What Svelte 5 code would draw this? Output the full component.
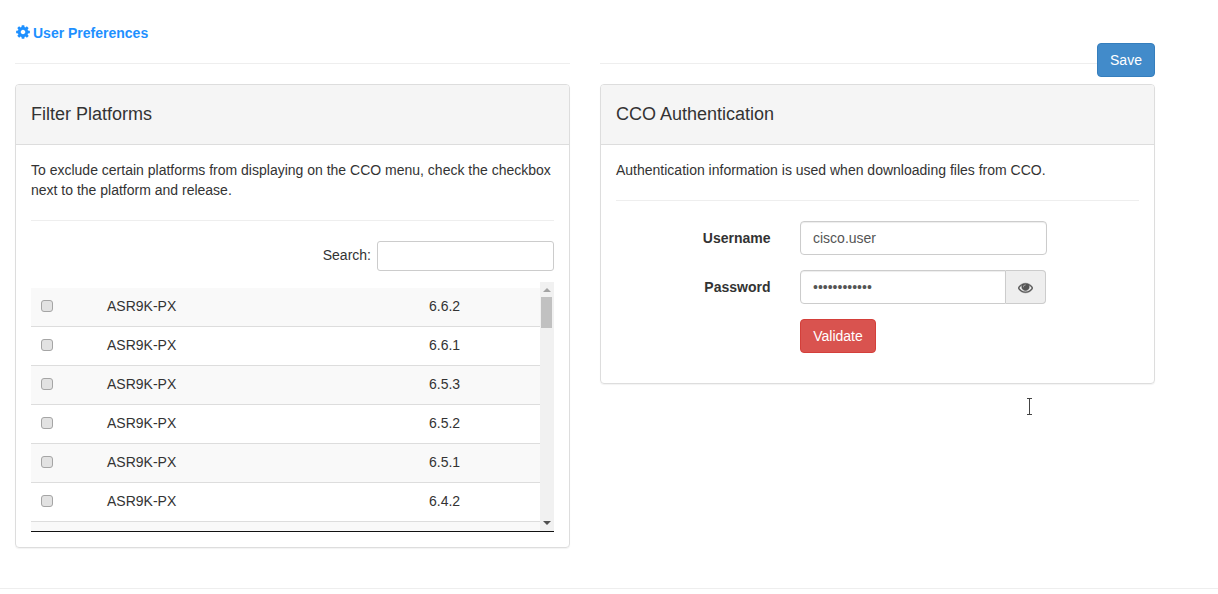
<script>
  const rows = ['6.6.2', '6.6.1', '6.5.3', '6.5.2', '6.5.1', '6.4.2'];
</script>

<div class="page">
  <div class="title">
    <svg class="gear" viewBox="0 0 1792 1792" aria-hidden="true"><path d="M1152 896q0-106-75-181t-181-75-181 75-75 181 75 181 181 75 181-75 75-181zm512-109v222q0 12-8 23t-20 13l-185 28q-19 54-39 91 35 50 107 138 10 12 10 25t-9 23q-27 37-99 108t-94 71q-12 0-26-9l-138-108q-44 23-91 38-16 136-29 186-7 28-36 28h-222q-14 0-24.500-8.500t-11.500-21.500l-28-184q-49-16-90-37l-141 107q-10 9-25 9-14 0-25-11-126-114-165-168-7-10-7-23 0-12 8-23 15-21 51-66.500t54-70.500q-27-50-41-99l-183-27q-13-2-21-12.500t-8-23.500v-222q0-12 8-23t19-13l186-28q14-46 39-92-40-57-107-138-10-12-10-24 0-10 9-23 26-36 98.500-107.500t94.500-71.500q13 0 26 10l138 107q44-23 91-38 16-136 29-186 7-28 36-28h222q14 0 24.500 8.500t11.500 21.500l28 184q49 16 90 37l142-107q9-9 24-9 13 0 25 10 129 119 165 170 7 8 7 22 0 12-8 23-15 21-51 66.500t-54 70.500q26 50 41 98l183 28q13 2 21 12.500t8 23.500z"/></svg>
    <span>User Preferences</span>
  </div>

  <div class="cols">
    <section class="col">
      <hr />
      <div class="panel">
        <h3 class="panel-heading">Filter Platforms</h3>
        <div class="panel-body">
          <p>To exclude certain platforms from displaying on the CCO menu, check the checkbox next to the platform and release.</p>
          <hr />
          <div class="search">
            <label for="search">Search:</label>
            <input id="search" type="text" />
          </div>
          <div class="scroller">
            <div class="viewport">
              <table>
                <tbody>
                  {#each rows as release}
                    <tr>
                      <td class="c-check"><input class="check" type="checkbox" /></td>
                      <td class="c-name">ASR9K-PX</td>
                      <td>{release}</td>
                    </tr>
                  {/each}
                  <tr class="peek"><td colspan="3"></td></tr>
                </tbody>
              </table>
            </div>
            <div class="scrollbar">
              <span class="arrow up"></span>
              <span class="thumb"></span>
              <span class="arrow down"></span>
            </div>
          </div>
        </div>
      </div>
    </section>

    <section class="col right">
      <button class="btn save" type="button">Save</button>
      <hr />
      <div class="panel">
        <h3 class="panel-heading">CCO Authentication</h3>
        <div class="panel-body">
          <p>Authentication information is used when downloading files from CCO.</p>
          <hr />
          <form class="auth">
            <label for="username">Username</label>
            <input id="username" class="control" type="text" value="cisco.user" />
            <label for="password">Password</label>
            <div class="group">
              <input id="password" class="control" type="password" value="cisco.user12" />
              <span class="addon">
                <svg class="eye" viewBox="0 0 1792 1792" aria-hidden="true"><path d="M1664 960q-152-236-381-353 61 104 61 225 0 185-131.500 316.500t-316.500 131.500-316.500-131.500-131.500-316.500q0-121 61-225-229 117-381 353 133 205 333.500 326.500t434.500 121.500 434.500-121.500 333.500-326.500zm-720-384q0-20-14-34t-34-14q-125 0-214.500 89.500t-89.500 214.500q0 20 14 34t34 14 34-14 14-34q0-86 61-147t147-61q20 0 34-14t14-34zm848 384q0 34-20 69-140 230-376.500 368.500t-499.500 138.500-499.500-139-376.500-368q-20-35-20-69t20-69q140-229 376.500-368t499.500-139 499.500 139 376.500 368q20 35 20 69z"/></svg>
              </span>
            </div>
            <button class="btn validate" type="button">Validate</button>
          </form>
        </div>
      </div>
    </section>
  </div>

  <hr class="footer-rule" />

  <svg class="ibeam" viewBox="0 0 9 19" aria-hidden="true">
    <path d="M2 1.500h5M4.500 1.500v16M2 17.500h5" fill="none" stroke="#fff" stroke-width="3" opacity=".7" />
    <path d="M2 1.500h5M4.500 1.500v16M2 17.500h5" fill="none" stroke="#444" stroke-width="1" />
  </svg>
</div>

<style>
  :global(body) {
    margin: 0;
    background: #fff;
    color: #333;
    font-family: "Liberation Sans", Arial, sans-serif;
    font-size: 14px;
    line-height: 20px;
  }
  .page {
    position: relative;
    height: 594px;
    overflow: hidden;
  }
  hr {
    margin: 0;
    border: 0;
    border-top: 1px solid #eee;
  }
  .title {
    display: flex;
    align-items: center;
    gap: 2px;
    width: 1170px;
    box-sizing: border-box;
    height: 20px;
    margin-top: 23px;
    padding-left: 15px;
    color: #1e90ff;
    font-size: 14px;
    font-weight: 700;
  }
  .gear {
    width: 16px;
    height: 16px;
    margin-top: -2px;
    fill: currentColor;
  }
  .cols {
    display: grid;
    grid-template-columns: 555px 555px;
    gap: 30px;
    width: 1170px;
    box-sizing: border-box;
    margin-top: 20px;
    padding: 0 15px;
    align-items: start;
  }
  .col { min-width: 0; }
  .right { position: relative; }
  .panel {
    margin-top: 20px;
    border: 1px solid #ddd;
    border-radius: 4px;
    box-shadow: 0 1px 1px rgba(0, 0, 0, 0.05);
  }
  .panel-heading {
    margin: 0;
    padding: 0 15px;
    height: 59px;
    line-height: 59px;
    background: #f5f5f5;
    border-bottom: 1px solid #ddd;
    border-radius: 3px 3px 0 0;
    font-size: 18px;
    font-weight: 400;
  }
  .panel-body { padding: 15px; }
  .panel-body p { margin: 0; }
  .panel-body hr { margin: 20px 0; }
  .search {
    display: flex;
    justify-content: flex-end;
    align-items: center;
    gap: 6px;
  }
  .search label { padding-bottom: 2px; }
  .search input {
    width: 177px;
    height: 30px;
    box-sizing: border-box;
    border: 1px solid #ccc;
    border-radius: 3px;
    background: #fff;
  }
  .scroller {
    display: flex;
    height: 249px;
    margin-top: 11px;
    border-bottom: 1px solid #111;
    box-sizing: content-box;
  }
  .viewport {
    flex: 1;
    min-width: 0;
    overflow: hidden;
    padding-top: 6px;
    box-sizing: border-box;
  }
  table {
    width: 100%;
    border-collapse: separate;
    border-spacing: 0;
    table-layout: fixed;
  }
  td {
    height: 36px;
    padding: 0 0 2px;
    border-bottom: 1px solid #ddd;
    vertical-align: middle;
  }
  tr:nth-child(odd) td { background: #f9f9f9; }
  .c-check {
    width: 76px;
    padding-left: 10px;
    box-sizing: border-box;
  }
  .c-name { width: 322px; }
  .check {
    appearance: none;
    display: block;
    width: 12px;
    height: 12px;
    margin: 0;
    border: 1px solid #a5a5a5;
    border-radius: 3px;
    background: #e2e2e2;
    box-sizing: border-box;
  }
  .scrollbar {
    position: relative;
    width: 14px;
    flex: none;
    background: #f1f1f1;
  }
  .thumb {
    position: absolute;
    top: 15px;
    left: 1px;
    width: 11px;
    height: 31px;
    background: #c1c1c1;
  }
  .arrow {
    position: absolute;
    left: 3px;
    width: 0;
    height: 0;
    border-left: 4px solid transparent;
    border-right: 4px solid transparent;
  }
  .up {
    top: 6px;
    border-bottom: 4px solid #a3a3a3;
  }
  .down {
    bottom: 6px;
    border-top: 4px solid #505050;
  }
  .btn {
    display: block;
    height: 34px;
    padding: 0 12px;
    border: 1px solid transparent;
    border-radius: 4px;
    color: #fff;
    font: 14px/20px "Liberation Sans", Arial, sans-serif;
    box-sizing: border-box;
  }
  .save {
    position: absolute;
    top: -20px;
    right: 0;
    width: 58px;
    background: #428bca;
    border-color: #357ebd;
  }
  .validate {
    grid-column: 2;
    justify-self: start;
    width: 76px;
    margin-bottom: 15px;
    background: #d9534f;
    border-color: #d43f3a;
  }
  .auth {
    display: grid;
    grid-template-columns: 154.500px 247px;
    column-gap: 29.500px;
    row-gap: 15px;
    align-items: center;
  }
  .auth label {
    text-align: right;
    font-weight: 700;
  }
  .control {
    width: 100%;
    height: 34px;
    box-sizing: border-box;
    padding: 0 12px;
    border: 1px solid #ccc;
    border-radius: 4px;
    background: #fff;
    color: #555;
    font: 14px/20px "Liberation Sans", Arial, sans-serif;
    box-shadow: inset 0 1px 1px rgba(0, 0, 0, 0.075);
  }
  .group {
    display: flex;
    width: 246px;
  }
  .group .control {
    flex: 1;
    min-width: 0;
    border-radius: 4px 0 0 4px;
  }
  .addon {
    display: flex;
    align-items: center;
    justify-content: center;
    width: 40px;
    flex: none;
    box-sizing: border-box;
    border: 1px solid #ccc;
    border-left: 0;
    border-radius: 0 4px 4px 0;
    background: #eee;
    color: #555;
  }
  .eye {
    width: 15px;
    height: 15px;
    fill: currentColor;
    stroke: currentColor;
    stroke-width: 50;
  }
  .footer-rule {
    margin-top: 40px;
  }
  .ibeam {
    position: absolute;
    left: 1025px;
    top: 397px;
    width: 9px;
    height: 19px;
  }
</style>
